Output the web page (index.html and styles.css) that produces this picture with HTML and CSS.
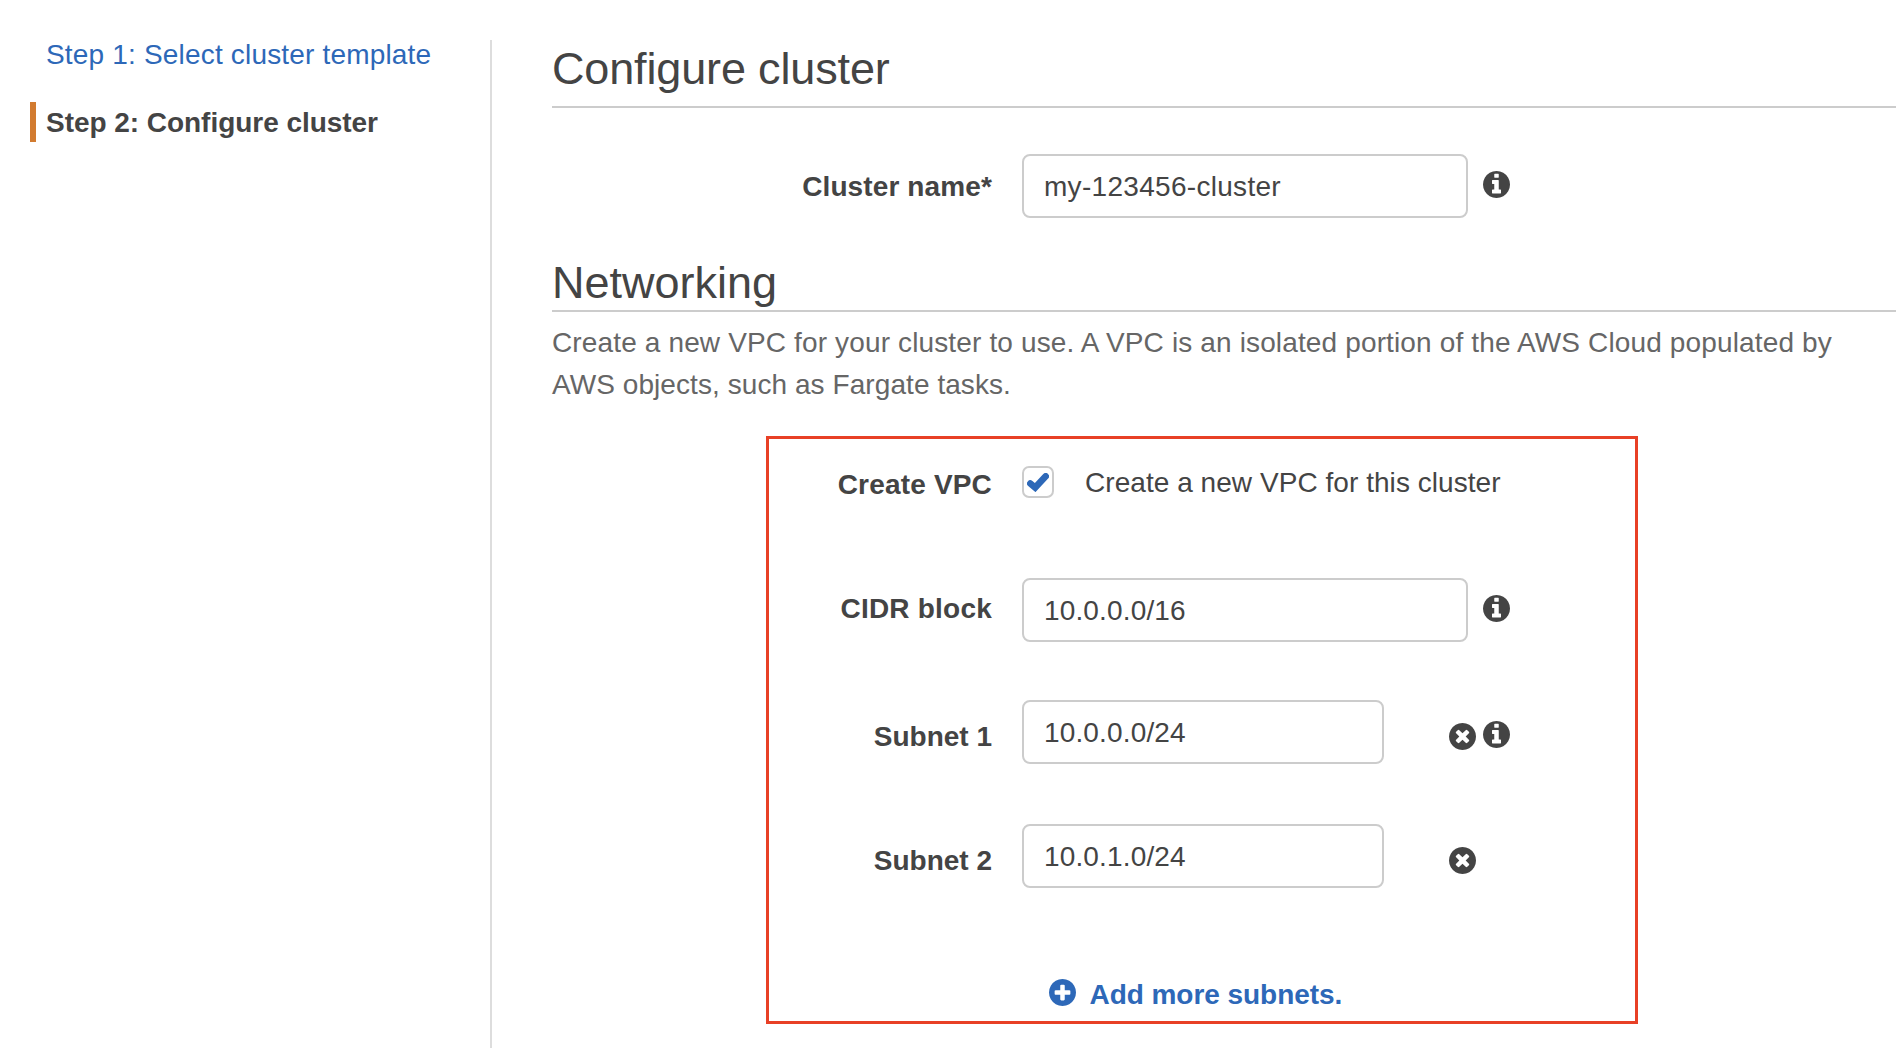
FILE: index.html
```html
<!DOCTYPE html>
<html lang="en">
<head>
<meta charset="utf-8">
<title>Configure cluster</title>
<link rel="stylesheet" href="styles.css">
</head>
<body>
<svg class="sprite" aria-hidden="true">
  <symbol id="info" viewBox="128 128 1536 1536"><path d="M1152 1376v-160q0-14-9-23t-23-9h-96v-512q0-14-9-23t-23-9h-320q-14 0-23 9t-9 23v160q0 14 9 23t23 9h96v320h-96q-14 0-23 9t-9 23v160q0 14 9 23t23 9h448q14 0 23-9t9-23zm-128-896v-160q0-14-9-23t-23-9h-192q-14 0-23 9t-9 23v160q0 14 9 23t23 9h192q14 0 23-9t9-23zm640 416q0 209-103 385.5t-279.5 279.5-385.5 103-385.5-103-279.5-279.5-103-385.5 103-385.5 279.5-279.5 385.5-103 385.5 103 279.5 279.5 103 385.5z"/></symbol>
  <symbol id="remove" viewBox="128 128 1536 1536"><path d="M1277 1122q0-26-19-45l-181-181 181-181q19-19 19-45 0-27-19-46l-90-90q-19-19-46-19-26 0-45 19l-181 181-181-181q-19-19-45-19-27 0-46 19l-90 90q-19 19-19 46 0 26 19 45l181 181-181 181q-19 19-19 45 0 27 19 46l90 90q19 19 46 19 26 0 45-19l181-181 181 181q19 19 45 19 27 0 46-19l90-90q19-19 19-46zm387-226q0 209-103 385.5t-279.5 279.5-385.5 103-385.5-103-279.5-279.5-103-385.5 103-385.5 279.5-279.5 385.5-103 385.5 103 279.5 279.5 103 385.5z"/></symbol>
  <symbol id="add" viewBox="128 128 1536 1536"><path d="M1344 960v-128q0-26-19-45t-45-19h-256v-256q0-26-19-45t-45-19h-128q-26 0-45 19t-19 45v256h-256q-26 0-45 19t-19 45v128q0 26 19 45t45 19h256v256q0 26 19 45t45 19h128q26 0 45-19t19-45v-256h256q26 0 45-19t19-45zm320-64q0 209-103 385.5t-279.5 279.5-385.5 103-385.5-103-279.5-279.5-103-385.5 103-385.5 279.5-279.5 385.5-103 385.5 103 279.5 279.5 103 385.5z"/></symbol>
</svg>
<div class="page">
  <nav class="steps">
    <a class="step">Step 1: Select cluster template</a>
    <a class="step step-current">Step 2: Configure cluster</a>
  </nav>
  <main class="content">
    <h1 class="heading">Configure cluster</h1>
    <div class="row row-name">
      <label class="label">Cluster name*</label>
      <div class="input input-name">my-123456-cluster</div>
      <div class="icons"><svg class="icon icon-info"><use href="#info"/></svg></div>
    </div>
    <h2 class="heading heading-net">Networking</h2>
    <p class="intro">Create a new VPC for your cluster to use. A VPC is an isolated portion of the AWS Cloud populated by<br><span class="intro-end">AWS objects, such as Fargate tasks.</span></p>
    <section class="vpc">
      <div class="row row-vpc">
        <label class="label">Create VPC</label>
        <div class="check"><svg class="tick" viewBox="0 0 22 19"><path d="M3.3 10.5 L8.2 14.6 L18.7 3.3"/></svg></div>
        <span class="check-text">Create a new VPC for this cluster</span>
      </div>
      <div class="row row-cidr">
        <label class="label">CIDR block</label>
        <div class="input">10.0.0.0/16</div>
        <div class="icons"><svg class="icon icon-info"><use href="#info"/></svg></div>
      </div>
      <div class="row row-subnet">
        <label class="label">Subnet 1</label>
        <div class="input input-short">10.0.0.0/24</div>
        <div class="icons"><svg class="icon"><use href="#remove"/></svg><svg class="icon icon-info"><use href="#info"/></svg></div>
      </div>
      <div class="row row-subnet row-last">
        <label class="label">Subnet 2</label>
        <div class="input input-short">10.0.1.0/24</div>
        <div class="icons"><svg class="icon"><use href="#remove"/></svg></div>
      </div>
      <a class="add"><svg class="icon"><use href="#add"/></svg><span class="add-text">Add more subnets.</span></a>
    </section>
  </main>
</div>
</body>
</html>
```
FILE: styles.css
```css
* { box-sizing: border-box; }
body {
  margin: 0;
  background: #fff;
  color: #444;
  font: 28px "Liberation Sans", Arial, sans-serif;
}
.sprite { display: none; }
.page { display: flex; height: 1048px; overflow: hidden; }

.steps { width: 490px; flex: none; padding: 34px 0 0 30px; }
.step {
  display: block;
  height: 40px;
  margin-bottom: 28px;
  padding-left: 16px;
  line-height: 42px;
  color: #2d68b8;
  letter-spacing: 0.18px;
  white-space: nowrap;
}
.step-current {
  padding-left: 10px;
  border-left: 6px solid #d27b30;
  color: #444;
  font-weight: bold;
  letter-spacing: -0.04px;
}

.content {
  flex: 1;
  min-width: 0;
  margin-top: 40px;
  padding-left: 60px;
  border-left: 2px solid #ddd;
}
.heading {
  margin: 0;
  padding-bottom: 9px;
  border-bottom: 2px solid #ccc;
  font-size: 45px;
  font-weight: normal;
  line-height: 57px;
  letter-spacing: -0.15px;
}
.heading-net { margin-top: 40px; padding-bottom: 3px; line-height: 49px; letter-spacing: 0; }
.intro {
  margin: 10px 0 30px;
  color: #666;
  line-height: 42px;
  letter-spacing: 0.14px;
  white-space: nowrap;
}
.intro-end { letter-spacing: 0.07px; }

.row { display: flex; align-items: flex-start; }
.label {
  width: 440px;
  flex: none;
  margin-right: 30px;
  font-weight: bold;
  line-height: 32px;
  letter-spacing: 0.12px;
  text-align: right;
}
.input {
  width: 446px;
  height: 64px;
  flex: none;
  padding-left: 20px;
  border: 2px solid #ccc;
  border-radius: 8px;
  line-height: 61px;
  letter-spacing: 0.15px;
}
.input-name { letter-spacing: 0.3px; }
.input-short { width: 362px; }
.icons { display: flex; align-items: flex-start; gap: 7px; margin-left: 14.5px; }
.input-short + .icons { margin-left: 64.5px; }
.icon { width: 27px; height: 27px; flex: none; fill: currentColor; }

.row-name { margin-top: 46px; }
.row-name .label { padding-top: 17px; }
.row-name .icons { padding-top: 16.5px; }

.vpc {
  width: 872px;
  height: 588px;
  margin-left: 214px;
  padding-top: 27px;
  border: 3px solid #e84026;
}
.vpc .label { width: 223px; }
.row-vpc { height: 32px; }
.row-vpc .label { padding-top: 3px; letter-spacing: 0.18px; }
.check {
  display: flex;
  align-items: center;
  justify-content: center;
  width: 32px;
  height: 32px;
  border: 2px solid #ccc;
  border-radius: 7px;
}
.tick {
  width: 22px;
  height: 19px;
  fill: none;
  stroke: #2d68b8;
  stroke-width: 6.6;
  stroke-linecap: round;
}
.check-text { padding-top: 1px; margin-left: 31px; line-height: 32px; letter-spacing: 0.05px; }
.row-cidr { margin-top: 80px; }
.row-cidr .label { padding-top: 15px; letter-spacing: 0.22px; }
.row-cidr .icons { padding-top: 16.5px; }
.row-subnet { margin-top: 58px; }
.row-subnet .label { padding-top: 21px; letter-spacing: 0; }
.row-subnet .icons { padding-top: 22.5px; }
.row-subnet .icon-info { margin-top: -2px; }
.row-last { margin-top: 60px; }
.add {
  display: flex;
  align-items: flex-start;
  gap: 14px;
  margin: 91px 0 0 279.5px;
  color: #2d68b8;
  font-weight: bold;
  line-height: 32px;
  letter-spacing: -0.05px;
}
```
